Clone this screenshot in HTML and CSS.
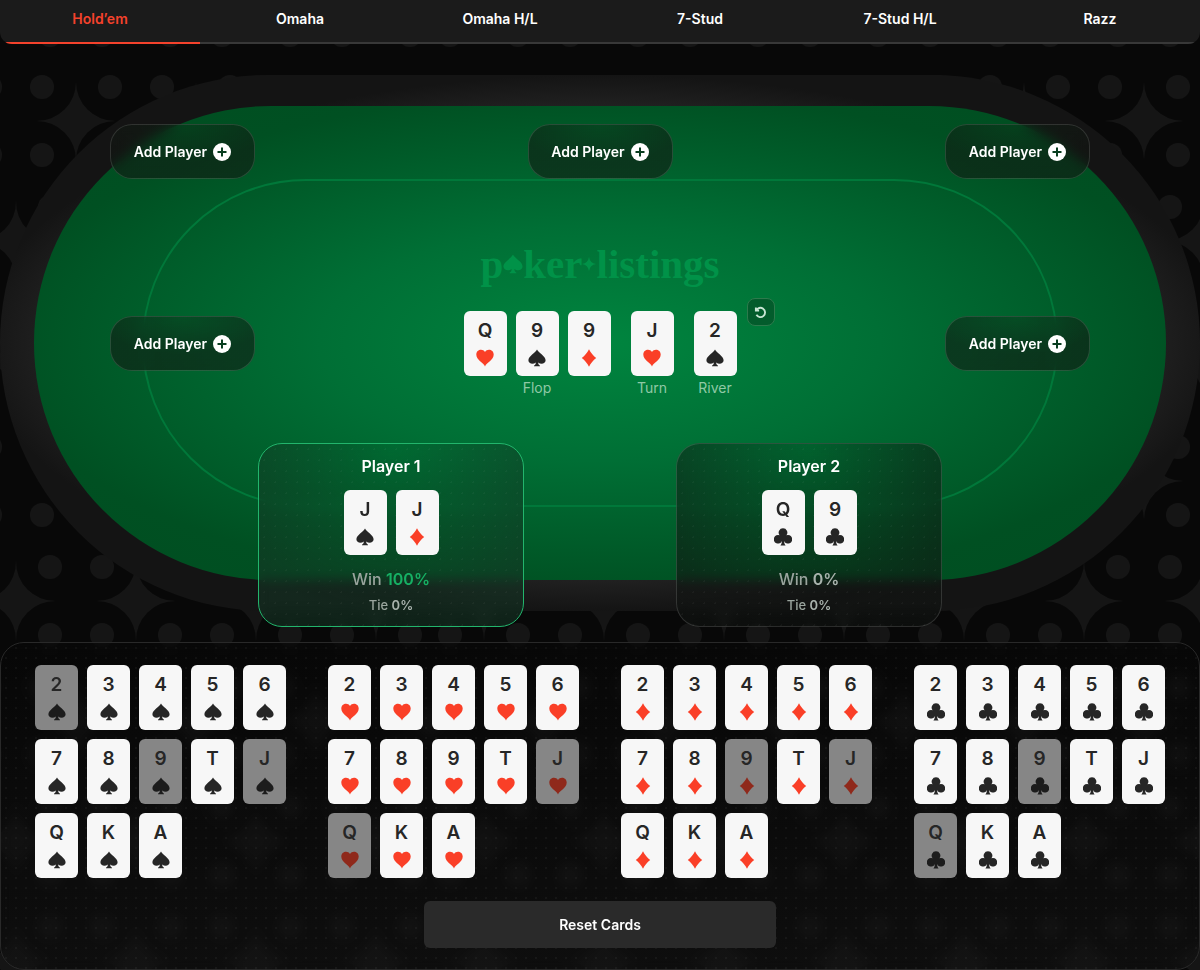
FILE: index.html
```html
<!DOCTYPE html>
<html lang="en">
<head>
<meta charset="utf-8">
<meta name="viewport" content="width=device-width, initial-scale=1">
<title>Poker Odds Calculator</title>
<link rel="stylesheet" href="styles.css">
</head>
<body>
<svg class="symbols" aria-hidden="true">
  <symbol id="spade" viewBox="0 0 18 18"><path d="M9 0.5C10.5 4 17.6 7 17.6 11.2C17.6 14.6 13 15.8 10.2 13.4C10.3 15.2 10.8 16 12 16.6V17.3H6V16.6C7.200 16 7.700 15.200 7.800 13.400C5 15.800 .4 14.600 .4 11.200C.4 7 7.500 4 9 .5Z"/></symbol>
  <symbol id="heart" viewBox="0 0 18 18"><path d="M9 17.500C7.600 13.800 .3 11.300 .3 5.600C.3 .2 7 -.6 9 3C11 -.6 17.700 .2 17.700 5.600C17.700 11.300 10.400 13.800 9 17.500Z"/></symbol>
  <symbol id="diamond" viewBox="0 0 18 18"><path d="M9 .2C10.600 3.600 13.300 6.800 16.200 9C13.300 11.200 10.600 14.400 9 17.800C7.400 14.400 4.700 11.200 1.800 9C4.700 6.800 7.400 3.600 9 .2Z"/></symbol>
  <symbol id="club" viewBox="0 0 18 18"><path d="M9 .3A4.300 4.300 0 0 1 12.400 7.300A4.300 4.300 0 1 1 10 13C10.200 15 10.500 16.200 11.600 17.500H6.400C7.500 16.200 7.800 15 8 13A4.300 4.300 0 1 1 5.600 7.300A4.300 4.300 0 0 1 9 .3Z"/></symbol>
  <symbol id="plus" viewBox="0 0 18 18"><circle cx="9" cy="9" r="9" fill="#fff"/><path d="M9 4.500V13.500M4.500 9H13.500" fill="none" stroke="#083d1f" stroke-width="2"/></symbol>
</svg>

<svg class="backdrop" aria-hidden="true">
  <defs>
    <g id="motif">
      <path d="M0-40A39 39 0 0 0 40 0A39 39 0 0 0 0 40A39 39 0 0 0-40 0A39 39 0 0 0 0-40Z"/>
      <circle cx="-34" cy="-34" r="12"/><circle cx="34" cy="-34" r="12"/>
      <circle cx="-34" cy="34" r="12"/><circle cx="34" cy="34" r="12"/>
    </g>
    <pattern id="lattice" x="-6" width="120" height="240" patternUnits="userSpaceOnUse">
      <g fill="#151515"><use href="#motif" x="60" y="60"/><use href="#motif" x="0" y="180"/><use href="#motif" x="120" y="180"/></g>
    </pattern>
    <pattern id="tile" x="430" y="301" width="828" height="600" patternUnits="userSpaceOnUse">
      <rect width="828" height="600" fill="url(#lattice)"/>
    </pattern>
  </defs>
  <rect width="100%" height="100%" fill="url(#tile)"/>
</svg>

<nav class="tabs" aria-label="Games">
  <a class="tab active" href="#holdem" aria-current="page">Hold’em</a>
  <a class="tab" href="#omaha">Omaha</a>
  <a class="tab" href="#omaha-hl">Omaha H/L</a>
  <a class="tab" href="#stud">7-Stud</a>
  <a class="tab" href="#stud-hl">7-Stud H/L</a>
  <a class="tab" href="#razz">Razz</a>
</nav>

<main>
  <section class="stage" aria-label="Table">
    <div class="rail"><div class="felt"><div class="line"></div></div></div>
    <div class="seats">
      <div class="row">
        <button class="add" type="button">Add Player <svg><use href="#plus"/></svg></button>
        <button class="add" type="button">Add Player <svg><use href="#plus"/></svg></button>
        <button class="add" type="button">Add Player <svg><use href="#plus"/></svg></button>
      </div>
      <div class="row middle">
        <button class="add" type="button">Add Player <svg><use href="#plus"/></svg></button>
        <div class="board">
          <div class="logo"><span>p</span><svg class="logo-spade"><use href="#spade"/></svg><span>ker</span><svg class="logo-star" viewBox="0 0 12 12"><path d="M6 0Q6.800 5.200 12 6Q6.800 6.800 6 12Q5.200 6.800 0 6Q5.200 5.200 6 0Z"/></svg><span>listings</span></div>
          <div class="streets">
            <div class="street">
              <div class="cards">
                <button class="card red" type="button">Q<svg><use href="#heart"/></svg></button>
                <button class="card" type="button">9<svg><use href="#spade"/></svg></button>
                <button class="card red" type="button">9<svg><use href="#diamond"/></svg></button>
              </div>
              <span>Flop</span>
            </div>
            <div class="street">
              <div class="cards"><button class="card red" type="button">J<svg><use href="#heart"/></svg></button></div>
              <span>Turn</span>
            </div>
            <div class="street">
              <div class="cards"><button class="card" type="button">2<svg><use href="#spade"/></svg></button></div>
              <span>River</span>
            </div>
            <button class="undo" type="button" aria-label="Clear board"><svg viewBox="0 0 14 14"><path d="M2 1.500V5H5.500M2.300 5A5 5 0 1 1 2.600 9.500"/></svg></button>
          </div>
        </div>
        <button class="add" type="button">Add Player <svg><use href="#plus"/></svg></button>
      </div>
      <div class="players">
        <article class="player winner">
          <h2>Player 1</h2>
          <div class="cards">
            <button class="card" type="button">J<svg><use href="#spade"/></svg></button>
            <button class="card red" type="button">J<svg><use href="#diamond"/></svg></button>
          </div>
          <p class="win">Win <b>100%</b></p>
          <p class="tie">Tie <b>0%</b></p>
        </article>
        <article class="player">
          <h2>Player 2</h2>
          <div class="cards">
            <button class="card" type="button">Q<svg><use href="#club"/></svg></button>
            <button class="card" type="button">9<svg><use href="#club"/></svg></button>
          </div>
          <p class="win">Win <b>0%</b></p>
          <p class="tie">Tie <b>0%</b></p>
        </article>
      </div>
    </div>
  </section>

  <section class="deck" aria-label="Deck">
    <div class="suits">
      <div class="suit">
        <button class="card" type="button" disabled>2<svg><use href="#spade"/></svg></button>
        <button class="card" type="button">3<svg><use href="#spade"/></svg></button>
        <button class="card" type="button">4<svg><use href="#spade"/></svg></button>
        <button class="card" type="button">5<svg><use href="#spade"/></svg></button>
        <button class="card" type="button">6<svg><use href="#spade"/></svg></button>
        <button class="card" type="button">7<svg><use href="#spade"/></svg></button>
        <button class="card" type="button">8<svg><use href="#spade"/></svg></button>
        <button class="card" type="button" disabled>9<svg><use href="#spade"/></svg></button>
        <button class="card" type="button">T<svg><use href="#spade"/></svg></button>
        <button class="card" type="button" disabled>J<svg><use href="#spade"/></svg></button>
        <button class="card" type="button">Q<svg><use href="#spade"/></svg></button>
        <button class="card" type="button">K<svg><use href="#spade"/></svg></button>
        <button class="card" type="button">A<svg><use href="#spade"/></svg></button>
      </div>
      <div class="suit">
        <button class="card red" type="button">2<svg><use href="#heart"/></svg></button>
        <button class="card red" type="button">3<svg><use href="#heart"/></svg></button>
        <button class="card red" type="button">4<svg><use href="#heart"/></svg></button>
        <button class="card red" type="button">5<svg><use href="#heart"/></svg></button>
        <button class="card red" type="button">6<svg><use href="#heart"/></svg></button>
        <button class="card red" type="button">7<svg><use href="#heart"/></svg></button>
        <button class="card red" type="button">8<svg><use href="#heart"/></svg></button>
        <button class="card red" type="button">9<svg><use href="#heart"/></svg></button>
        <button class="card red" type="button">T<svg><use href="#heart"/></svg></button>
        <button class="card red" type="button" disabled>J<svg><use href="#heart"/></svg></button>
        <button class="card red" type="button" disabled>Q<svg><use href="#heart"/></svg></button>
        <button class="card red" type="button">K<svg><use href="#heart"/></svg></button>
        <button class="card red" type="button">A<svg><use href="#heart"/></svg></button>
      </div>
      <div class="suit">
        <button class="card red" type="button">2<svg><use href="#diamond"/></svg></button>
        <button class="card red" type="button">3<svg><use href="#diamond"/></svg></button>
        <button class="card red" type="button">4<svg><use href="#diamond"/></svg></button>
        <button class="card red" type="button">5<svg><use href="#diamond"/></svg></button>
        <button class="card red" type="button">6<svg><use href="#diamond"/></svg></button>
        <button class="card red" type="button">7<svg><use href="#diamond"/></svg></button>
        <button class="card red" type="button">8<svg><use href="#diamond"/></svg></button>
        <button class="card red" type="button" disabled>9<svg><use href="#diamond"/></svg></button>
        <button class="card red" type="button">T<svg><use href="#diamond"/></svg></button>
        <button class="card red" type="button" disabled>J<svg><use href="#diamond"/></svg></button>
        <button class="card red" type="button">Q<svg><use href="#diamond"/></svg></button>
        <button class="card red" type="button">K<svg><use href="#diamond"/></svg></button>
        <button class="card red" type="button">A<svg><use href="#diamond"/></svg></button>
      </div>
      <div class="suit">
        <button class="card" type="button">2<svg><use href="#club"/></svg></button>
        <button class="card" type="button">3<svg><use href="#club"/></svg></button>
        <button class="card" type="button">4<svg><use href="#club"/></svg></button>
        <button class="card" type="button">5<svg><use href="#club"/></svg></button>
        <button class="card" type="button">6<svg><use href="#club"/></svg></button>
        <button class="card" type="button">7<svg><use href="#club"/></svg></button>
        <button class="card" type="button">8<svg><use href="#club"/></svg></button>
        <button class="card" type="button" disabled>9<svg><use href="#club"/></svg></button>
        <button class="card" type="button">T<svg><use href="#club"/></svg></button>
        <button class="card" type="button">J<svg><use href="#club"/></svg></button>
        <button class="card" type="button" disabled>Q<svg><use href="#club"/></svg></button>
        <button class="card" type="button">K<svg><use href="#club"/></svg></button>
        <button class="card" type="button">A<svg><use href="#club"/></svg></button>
      </div>
    </div>
    <button class="reset" type="button">Reset Cards</button>
  </section>
</main>
</body>
</html>
```
FILE: styles.css
```css
* { box-sizing: border-box; }

body {
  position: relative;
  margin: 0;
  background: #080808;
  color: #fff;
  font-family: Inter, "Liberation Sans", sans-serif;
}

button { border: 0; padding: 0; font: inherit; color: inherit; cursor: pointer; }
h2, p { margin: 0; }

.symbols { position: absolute; width: 0; height: 0; }
.backdrop { position: absolute; inset: 0; width: 100%; height: 100%; z-index: -1; }

/* Game tabs */
.tabs {
  display: grid;
  grid-template-columns: repeat(6, 1fr);
  overflow: hidden;
  background: #1b1b1b;
  border-radius: 0 0 12px 12px;
}
.tab {
  padding: 8px 0 12px;
  border-bottom: 2px solid #383838;
  color: #fff;
  font-size: 14px;
  font-weight: 600;
  line-height: 22px;
  text-align: center;
  text-decoration: none;
}
.tab.active { color: #f4422c; border-color: #f4422c; }

/* Table */
.stage { display: grid; padding-top: 31px; margin-bottom: 15px; }
.rail, .seats { grid-area: 1 / 1; }
.rail {
  margin-bottom: 16px;
  padding: 31px 34px;
  display: grid;
  border-radius: 268px;
  background: radial-gradient(ellipse 52% 50% at 50% 50%, #343434 70%, #141414 100%);
}
.felt {
  display: grid;
  padding: 73px 108px;
  border-radius: 237px;
  background: radial-gradient(ellipse farthest-corner at 50% 50%, #00853f 0%, #006f35 35%, #005022 75%, #004d20 100%);
}
.line { border: 2px solid #00783a; border-radius: 164px; }

.seats { padding-top: 49px; }
.row {
  display: grid;
  grid-template-columns: 145px 1fr 145px;
  justify-items: center;
  padding: 0 110px;
}
.middle { margin-top: 65px; min-height: 199px; align-items: center; }

.add {
  display: flex;
  align-items: center;
  justify-content: center;
  gap: 6px;
  width: 145px;
  height: 55px;
  border: 1px solid rgba(255, 255, 255, .13);
  border-radius: 22px;
  background: radial-gradient(ellipse 60% 70% at 50% 0, rgba(14, 40, 22, .35), rgba(18, 22, 18, .56));
  backdrop-filter: blur(6px);
  font-size: 14px;
  font-weight: 600;
}
.add svg { width: 18px; height: 18px; }

.board { align-self: start; }
.logo {
  display: flex;
  align-items: center;
  justify-content: center;
  height: 40px;
  margin-bottom: 27px;
  color: #009248;
  fill: currentColor;
  font: bold 41px/40px "Liberation Serif", serif;
}
.logo-spade { width: 20px; height: 20px; }
.logo-star { width: 14px; height: 14px; }

.streets { position: relative; display: flex; justify-content: center; gap: 20px; }
.street { display: flex; flex-direction: column; align-items: center; gap: 2px; }
.street span { color: #8fc9a5; font-size: 14px; line-height: 20px; }
.cards { display: flex; justify-content: center; gap: 9px; }

.card {
  display: flex;
  flex-direction: column;
  align-items: center;
  width: 43px;
  height: 65px;
  padding-top: 8px;
  gap: 6px;
  border-radius: 6px;
  background: #f7f7f7;
  color: #262626;
  fill: #262626;
  font-size: 19px;
  font-weight: 600;
  line-height: 24px;
}
.card svg { width: 18px; height: 18px; }
.card.red svg { fill: #fa3f27; }
.card:disabled { background: #868686; color: #262626; fill: #1c1c1c; cursor: default; }
.card.red:disabled svg { fill: #8f291b; }

.undo {
  position: absolute;
  left: calc(100% + 10px);
  top: -13px;
  display: grid;
  place-items: center;
  width: 28px;
  height: 28px;
  border: 1px solid #2d7a4c;
  border-radius: 8px;
  background: #035c2c;
}
.undo svg { width: 13px; height: 13px; fill: none; stroke: #c9e6d5; stroke-width: 2; }

/* Player panels */
.players { display: flex; justify-content: center; gap: 152px; }
.player {
  width: 266px;
  padding: 10px 0 11px;
  border: 1px solid rgba(255, 255, 255, .14);
  border-radius: 24px;
  background:
    radial-gradient(circle, rgba(255, 255, 255, .035) 1px, transparent 1px) 0 0 / 11px 11px,
    radial-gradient(ellipse 65% 100% at 50% 0, rgba(10, 20, 12, .1), rgba(17, 20, 18, .58));
  backdrop-filter: blur(6px);
  text-align: center;
}
.winner {
  border-color: #22b56c;
  background:
    radial-gradient(circle, rgba(255, 255, 255, .035) 1px, transparent 1px) 0 0 / 11px 11px,
    radial-gradient(ellipse 65% 100% at 50% 0, rgba(0, 100, 50, .1), rgba(20, 52, 36, .6));
}
.player h2 { margin-bottom: 12px; font-size: 16px; font-weight: 600; line-height: 24px; }
.win { margin-top: 12px; color: #9aa59e; font-size: 16px; font-weight: 500; line-height: 24px; }
.tie { margin-top: 4px; color: #9aa59e; font-size: 13px; font-weight: 500; line-height: 20px; }
.player b { font-weight: 600; color: #a9b3ad; }
.winner .win b { color: #16b064; }

/* Deck */
.deck {
  padding: 22px 34px 21px;
  border: 1px solid #292929;
  border-radius: 24px;
  background:
    radial-gradient(circle, rgba(255, 255, 255, .04) 1px, transparent 1px) 0 0 / 10px 10px,
    linear-gradient(rgba(8, 8, 8, .5), rgba(18, 18, 18, .6));
  backdrop-filter: blur(6px);
}
.suits { display: flex; flex-wrap: wrap; justify-content: space-between; gap: 24px; }
.suit { display: grid; grid-template-columns: repeat(5, 43px); gap: 9px; }
.reset {
  display: block;
  width: 352px;
  max-width: 100%;
  height: 47px;
  margin: 23px auto 0;
  border-radius: 6px;
  background: #2a2a2a;
  font-size: 14px;
  font-weight: 600;
}
```
